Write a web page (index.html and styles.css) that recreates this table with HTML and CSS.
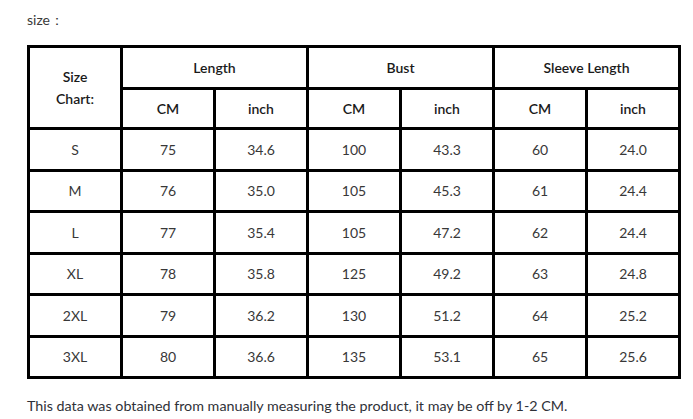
FILE: index.html
```html
<!DOCTYPE html>
<html>
<head>
<meta charset="utf-8">
<link rel="stylesheet" href="styles.css">
</head>
<body>
<div class="page">
  <p class="label">size：</p>
  <table class="chart">
    <colgroup>
      <col><col><col><col><col><col><col>
    </colgroup>
    <thead>
      <tr class="head1">
        <th rowspan="2" class="size-head">Size<br>Chart:</th>
        <th colspan="2">Length</th>
        <th colspan="2">Bust</th>
        <th colspan="2">Sleeve Length</th>
      </tr>
      <tr class="head2">
        <th>CM</th><th>inch</th>
        <th>CM</th><th>inch</th>
        <th>CM</th><th>inch</th>
      </tr>
    </thead>
    <tbody>
      <tr><td>S</td><td>75</td><td>34.6</td><td>100</td><td>43.3</td><td>60</td><td>24.0</td></tr>
      <tr><td>M</td><td>76</td><td>35.0</td><td>105</td><td>45.3</td><td>61</td><td>24.4</td></tr>
      <tr><td>L</td><td>77</td><td>35.4</td><td>105</td><td>47.2</td><td>62</td><td>24.4</td></tr>
      <tr><td>XL</td><td>78</td><td>35.8</td><td>125</td><td>49.2</td><td>63</td><td>24.8</td></tr>
      <tr><td>2XL</td><td>79</td><td>36.2</td><td>130</td><td>51.2</td><td>64</td><td>25.2</td></tr>
      <tr><td>3XL</td><td>80</td><td>36.6</td><td>135</td><td>53.1</td><td>65</td><td>25.6</td></tr>
    </tbody>
  </table>
  <p class="note">This data was obtained from manually measuring the product, it may be off by 1-2 CM.</p>
</div>
</body>
</html>
```

FILE: styles.css
```css
html, body {
  margin: 0;
  padding: 0;
  background: #fff;
}

.page {
  padding: 12px 0 0 27px;
  font-family: Lato, "Liberation Sans", sans-serif;
  color: #333;
}

.label {
  margin: 0;
  font-size: 14px;
  line-height: 16px;
  color: #3a3a3a;
}

.chart {
  margin-top: 17px;
  border-collapse: collapse;
  table-layout: fixed;
  width: 654px;
  border: 3px solid #000;
}

.chart col {
  width: 93px;
}

.chart th,
.chart td {
  border: 3px solid #000;
  padding: 0;
  text-align: center;
  vertical-align: middle;
  font-size: 14px;
}

.chart th {
  font-weight: 600;
  color: #1a1a1a;
}

.chart td {
  font-weight: 400;
  color: #383838;
}

.size-head {
  line-height: 22px;
}

.head1 {
  height: 42px;
}

.head2 {
  height: 40px;
}

.chart tbody tr {
  height: 41.5px;
}

.note {
  margin: 18px 0 0;
  font-size: 14.3px;
  line-height: 18px;
  color: #2f3138;
}
```
